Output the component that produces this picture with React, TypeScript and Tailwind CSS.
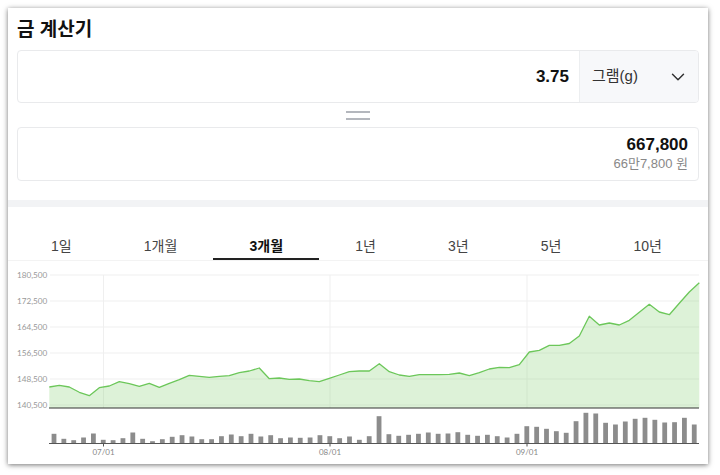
import { ChevronDown } from 'lucide-react'

const TABS = ['1일', '1개월', '3개월', '1년', '3년', '5년', '10년']
const ACTIVE_TAB = '3개월'

// price line, one point per trading day (y in page px, x steps of 10px)
const PRICE_Y = [
  387, 385.3, 387, 392.3, 395.7, 387.7, 386, 381.7, 383.7, 386.3,
  383.3, 387.3, 383.3, 379.7, 375.3, 376.3, 377.3, 376.3, 375.7, 372.7,
  371, 368, 378.7, 378, 379.3, 379, 380.7, 381.7, 378.3, 375,
  371.7, 371, 371, 363.7, 371.7, 375, 376.3, 374.7, 374.7, 374.7,
  374.3, 373, 375.7, 372.7, 369, 367.3, 367.7, 364.7, 352, 350.3,
  345.3, 345.3, 343.5, 336, 316.3, 325, 323, 325, 320.3, 312.3,
  304.3, 312, 314.7, 303.3, 292, 282.7,
]

// volume bar heights in px
const VOLUME_H = [
  9.7, 4.7, 3.3, 6, 10, 3.7, 3.3, 5.3, 11, 4.7, 2.3, 4.3, 6.7, 8.3, 7, 4.3,
  4.3, 7.3, 9, 7.3, 9.7, 7, 8.3, 5.3, 6, 5.7, 6, 8.3, 7.3, 5.3, 7, 3.7,
  7.3, 27.3, 9.3, 7.7, 8.7, 9.7, 11, 9.7, 10, 11.3, 8.7, 7.7, 8.7, 7.3, 6, 9.7,
  17.3, 16.7, 14.7, 12.3, 10.7, 22.3, 30.7, 30, 20.7, 19, 22, 24.7, 25.7, 23.7,
  21, 21.3, 25.7, 19,
]

const Y_TICKS = [
  { label: '180,500', y: 275 },
  { label: '172,500', y: 301 },
  { label: '164,500', y: 327 },
  { label: '156,500', y: 353 },
  { label: '148,500', y: 379 },
  { label: '140,500', y: 405 },
]

const X_TICKS = [
  { label: '07/01', x: 103.5 },
  { label: '08/01', x: 330 },
  { label: '09/01', x: 527 },
]

const LEFT = 49.3
const RIGHT = 699.3
const BASE = 408
const VOL_BASE = 443.5

function PriceChart() {
  const pts = PRICE_Y.map((y, i) => `${LEFT + i * 10},${y}`)
  const line = `M${pts.join(' L')}`
  const area = `${line} L${RIGHT},${BASE} L${LEFT},${BASE} Z`

  return (
    <svg viewBox="8 261 700 203" width={700} height={203} className="block">
      {Y_TICKS.map(t => (
        <g key={t.label}>
          <line x1={50} x2={699} y1={t.y} y2={t.y} stroke="#efefef" strokeWidth={1} />
          <text x={17} y={t.y + 3} fontSize={8.2} fill="#999" fontFamily="Lato, sans-serif">
            {t.label}
          </text>
        </g>
      ))}
      {X_TICKS.map(t => (
        <line key={t.label} x1={t.x} x2={t.x} y1={275} y2={BASE} stroke="#efefef" strokeWidth={1} />
      ))}
      <path d={area} fill="rgba(120,205,100,0.25)" />
      <path d={line} fill="none" stroke="#6cc75a" strokeWidth={1.3} strokeLinejoin="round" />
      <line x1={49} x2={699} y1={BASE} y2={BASE} stroke="#333" strokeWidth={1} />

      {VOLUME_H.map((h, i) => (
        <rect key={i} x={54 + i * 9.85 - 2.4} y={VOL_BASE - h} width={4.8} height={h} fill="#8c8c8c" />
      ))}
      <line x1={49} x2={699} y1={VOL_BASE} y2={VOL_BASE} stroke="#555" strokeWidth={1.2} />
      {X_TICKS.map(t => (
        <g key={t.label}>
          <line x1={t.x} x2={t.x} y1={VOL_BASE} y2={VOL_BASE + 3} stroke="#555" strokeWidth={1} />
          <text x={t.x} y={455} fontSize={8} fill="#888" textAnchor="middle" fontFamily="Lato, sans-serif">
            {t.label}
          </text>
        </g>
      ))}
    </svg>
  )
}

export default function App() {
  return (
    <div className="min-h-screen bg-white pt-2 pl-2 font-['Liberation_Sans','Noto_Sans_CJK_KR',sans-serif]">
      <div className="w-[700px] h-[456px] bg-white overflow-hidden shadow-[0_1px_5px_rgba(0,0,0,0.55)]">
        <div className="px-[9px]">
          <h1 className="pt-[10px] mb-[8px] text-[19px] leading-[24px] font-bold text-[#111]">금 계산기</h1>

          <div className="flex h-[53px] rounded border border-[#e9eaec] overflow-hidden">
            <div className="flex-1 flex items-center justify-end pr-[10px] text-[17px] font-bold text-[#111]">
              3.75
            </div>
            <div className="w-[119px] flex items-center justify-between pl-[12px] pr-[9px] bg-[#f7f8fa] border-l border-[#eceef0]">
              <span className="text-[15px] text-[#333]">그램(g)</span>
              <ChevronDown size={22} strokeWidth={1.6} className="text-[#333]" />
            </div>
          </div>

          <div className="h-[24px] flex flex-col items-center justify-center gap-[5px]">
            <span className="w-[24px] h-[2px] bg-[#b4b7bd]" />
            <span className="w-[24px] h-[2px] bg-[#b4b7bd]" />
          </div>

          <div className="h-[54px] rounded border border-[#e9eaec] flex flex-col items-end justify-center pr-[10px]">
            <span className="text-[17px] leading-[20px] font-bold text-[#111]">667,800</span>
            <span className="text-[13px] leading-[18px] text-[#888]">66만7,800 원</span>
          </div>
        </div>

        <div className="h-[7px] mt-[19px] bg-[#f2f3f5]" />

        <div className="flex pl-[7px] pr-[10px] border-b border-[#f3f3f3]">
          {TABS.map(tab => {
            const active = tab === ACTIVE_TAB
            return (
              <button
                key={tab}
                className={
                  active
                    ? 'flex-auto h-[53px] pt-[26px] text-[14px] leading-[20px] font-bold text-[#111] border-b-2 border-[#222]'
                    : 'flex-auto h-[53px] pt-[26px] text-[14px] leading-[20px] text-[#444] border-b-2 border-transparent'
                }
              >
                {tab}
              </button>
            )
          })}
        </div>

        <PriceChart />
      </div>
    </div>
  )
}
